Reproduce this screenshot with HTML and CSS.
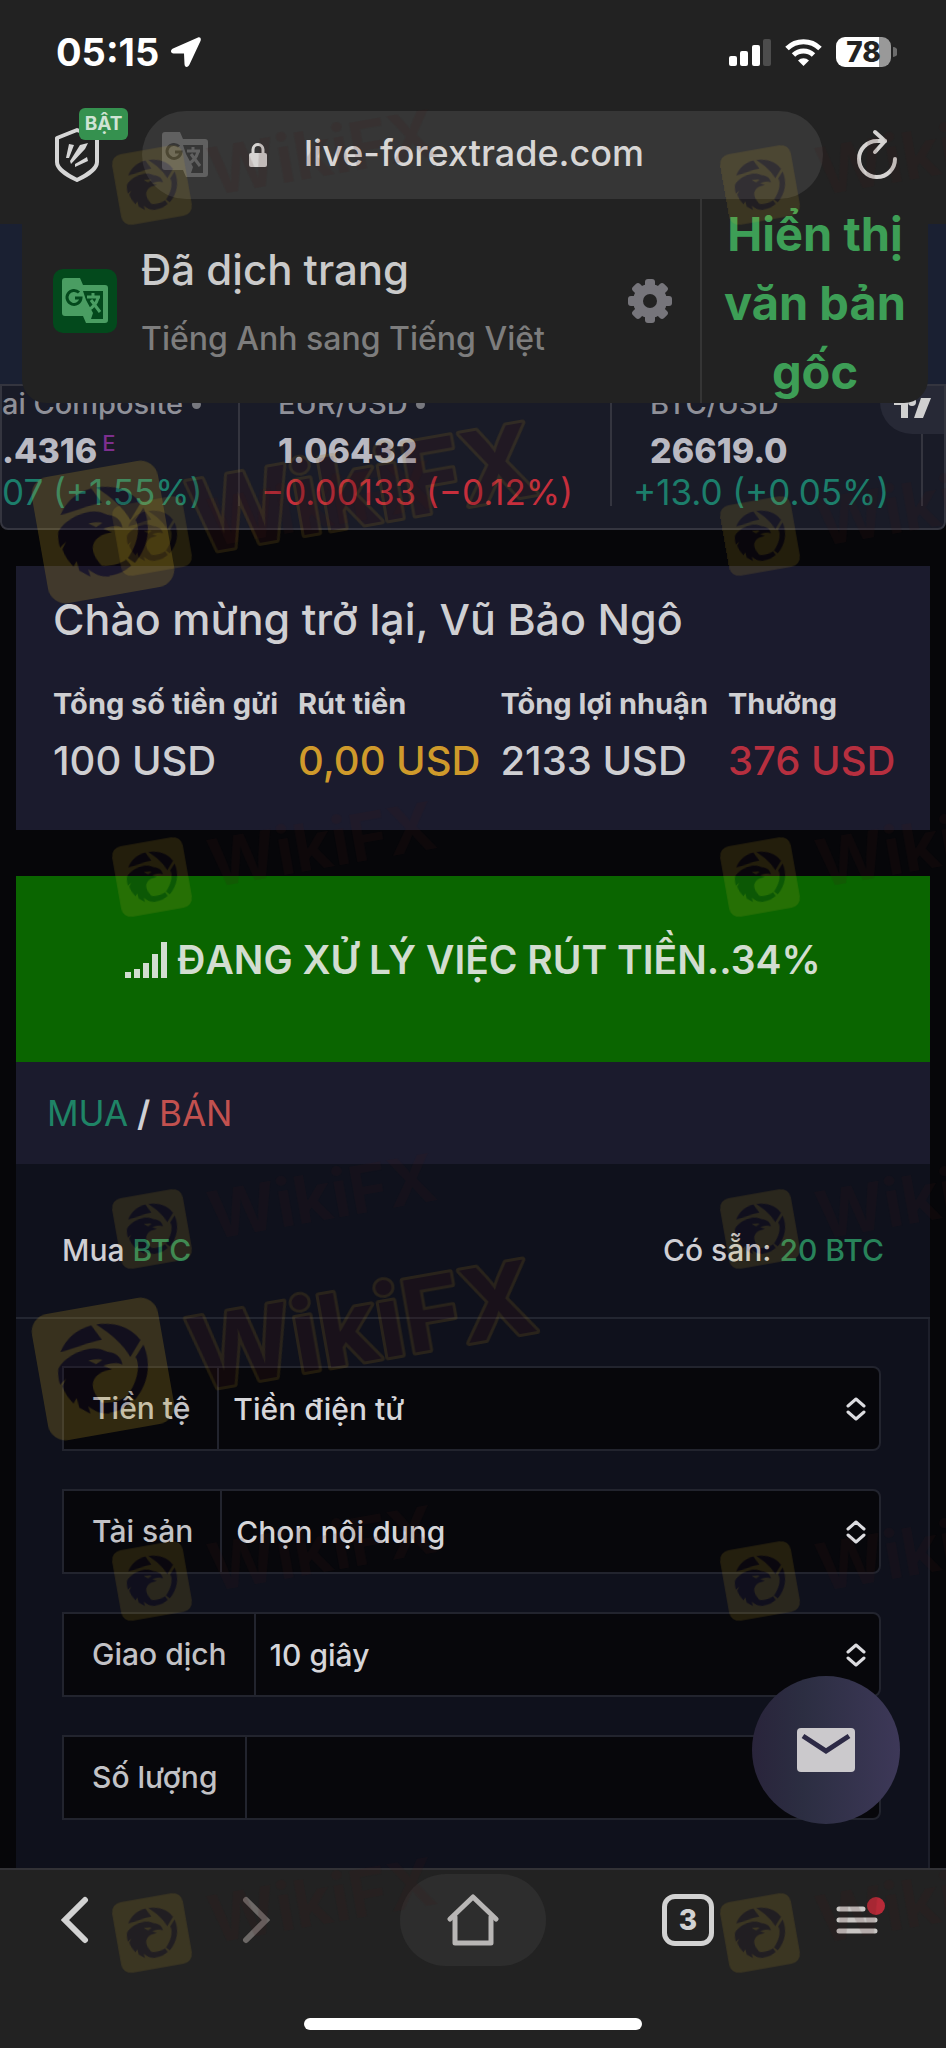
FILE: index.html
```html
<!DOCTYPE html>
<html lang="vi">
<head>
<meta charset="UTF-8">
<meta name="viewport" content="width=device-width, initial-scale=1">
<title>live-forextrade.com</title>
<link rel="stylesheet" href="styles.css">
</head>
<body>
<div class="phone">

<header class="top">
  <div class="status">
    <div class="clock">05:15
      <svg width="30" height="30" viewBox="0 0 30 30"><path d="M27 .5 2 11.500c-3 1.500-2.500 5 .5 5H13l.5 10.500c0 3.500 3.500 4 5 .5L29.500 4c1-2.500-.5-4.500-2.500-3.500z" fill="#fff"/></svg>
    </div>
    <div class="signals">
      <svg width="42" height="27" viewBox="0 0 42 27" fill="#fff"><rect y="17" width="8" height="10" rx="2"/><rect x="11" y="12" width="8" height="15" rx="2"/><rect x="23" y="6" width="8" height="21" rx="2"/><rect x="34" width="8" height="27" rx="2" fill="#4c4c4c"/></svg>
      <svg width="37" height="27" viewBox="0 0 37 27"><g fill="none" stroke="#fff" stroke-width="5"><path d="M2 9.500a23.500 23.500 0 0 1 33 0"/><path d="M8.500 16a14.500 14.500 0 0 1 20 0"/></g><path d="M18.500 27l-5.500-5.500a8 8 0 0 1 11 0z" fill="#fff"/></svg>
      <div class="battery"><span>78</span></div>
      <svg class="cap" width="4" height="10" viewBox="0 0 4 10"><path d="M0 0a5 5 0 0 1 0 10z" fill="#6c6c6c"/></svg>
    </div>
  </div>
  <div class="address">
    <button class="shield" aria-label="Chặn quảng cáo">
      <svg width="46" height="56" viewBox="0 0 46 56"><path d="M23 3 43 11v24c0 6-9 13-20 18C12 48 3 41 3 35V11z" fill="none" stroke="#d6d6d6" stroke-width="4" stroke-linejoin="round"/><path d="M15 17l5 1-5 13h-3zM26 18l8-2-3 6-14 15-1-3zM33 30l1 4-13 6v-3z" fill="#d6d6d6"/></svg>
      <span class="on">BẬT</span>
    </button>
    <div class="url">
      <svg class="tr-icon" width="46" height="46" viewBox="0 0 46 46"><use href="#translate"/></svg>
      <svg class="lock" width="18" height="24" viewBox="0 0 18 24"><rect y="10" width="18" height="14" rx="2" fill="#d6d4d2"/><path d="M4 11V6.500a5 5 0 0 1 10 0V11" fill="none" stroke="#d6d4d2" stroke-width="3"/></svg>
      <span>live-forextrade.com</span>
    </div>
    <button class="reload" aria-label="Tải lại">
      <svg width="44" height="52" viewBox="0 0 44 52" fill="none" stroke="#d6d4d2" stroke-width="4" stroke-linecap="round" stroke-linejoin="round"><path d="M40 30a18 18 0 1 1-18-18h8"/><path d="M20 3l10 9-10 11"/></svg>
    </button>
  </div>
  <div class="translate">
    <div class="tr-badge"><svg width="46" height="46" viewBox="0 0 46 46"><use href="#translate"/></svg></div>
    <div class="tr-text">
      <strong>Đã dịch trang</strong>
      <span>Tiếng Anh sang Tiếng Việt</span>
    </div>
    <button class="gear" aria-label="Cài đặt">
      <svg width="44" height="44" viewBox="0 0 44 44"><g fill="#76757b"><circle cx="22" cy="22" r="17"/><g id="teeth"><rect x="17" y="0" width="10" height="44" rx="3"/><rect x="0" y="17" width="44" height="10" rx="3"/></g><use href="#teeth" transform="rotate(45 22 22)"/></g><circle cx="22" cy="22" r="7" fill="#222"/></svg>
    </button>
    <button class="original">Hiển thị văn bản gốc</button>
  </div>
</header>

<main>
  <div class="navstrip"></div>
  <section class="ticker">
    <div class="quote first">
      <span class="name">ai Composite <i></i></span>
      <b>.4316<sup>E</sup></b>
      <span class="up">07 (+1.55%)</span>
    </div>
    <div class="quote second">
      <span class="name">EUR/USD <i></i></span>
      <b>1.06432</b>
      <span class="down">−0.00133 (−0.12%)</span>
    </div>
    <div class="quote third">
      <span class="name">BTC/USD</span>
      <b>26619.0</b>
      <span class="up">+13.0 (+0.05%)</span>
    </div>
    <a class="tv" href="#" aria-label="TradingView"><svg width="38" height="20" viewBox="0 0 38 20" fill="#d0d0d0"><path d="M0 0h14v20H7V7H0z"/><circle cx="18" cy="4" r="4"/><path d="M27 0h10l-8 20h-9z"/></svg></a>
  </section>

  <section class="welcome">
    <h1>Chào mừng trở lại, Vũ Bảo Ngô</h1>
    <dl>
      <div><dt>Tổng số tiền gửi</dt><dd>100 USD</dd></div>
      <div><dt>Rút tiền</dt><dd class="gold">0,00 USD</dd></div>
      <div><dt>Tổng lợi nhuận</dt><dd>2133 USD</dd></div>
      <div><dt>Thưởng</dt><dd class="red">376 USD</dd></div>
    </dl>
  </section>

  <section class="progress">
    <svg width="42" height="36" viewBox="0 0 42 36" fill="#d2ddd0"><rect y="30" width="6" height="6"/><rect x="9" y="27" width="6" height="9"/><rect x="18" y="21" width="6" height="15"/><rect x="27" y="12" width="6" height="24"/><rect x="36" width="6" height="36"/></svg>
    <h2>ĐANG XỬ LÝ VIỆC RÚT TIỀN..34%</h2>
  </section>

  <section class="trade">
    <h2><span class="buy">MUA</span> / <span class="sell">BÁN</span></h2>
    <div class="pair">
      <span>Mua <em>BTC</em></span>
      <span>Có sẵn: <em>20 BTC</em></span>
    </div>
    <form>
      <div class="field">
        <label for="currency">Tiền tệ</label>
        <select id="currency"><option>Tiền điện tử</option></select>
        <svg class="arrows" width="20" height="24" viewBox="0 0 20 24"><use href="#updown"/></svg>
      </div>
      <div class="field">
        <label for="asset">Tài sản</label>
        <select id="asset"><option>Chọn nội dung</option></select>
        <svg class="arrows" width="20" height="24" viewBox="0 0 20 24"><use href="#updown"/></svg>
      </div>
      <div class="field">
        <label for="duration">Giao dịch</label>
        <select id="duration"><option>10 giây</option></select>
        <svg class="arrows" width="20" height="24" viewBox="0 0 20 24"><use href="#updown"/></svg>
      </div>
      <div class="field">
        <label for="amount">Số lượng</label>
        <input id="amount" type="text">
      </div>
    </form>
  </section>

  <button class="mail" aria-label="Liên hệ">
    <svg width="58" height="44" viewBox="0 0 58 44"><rect width="58" height="44" rx="4" fill="#cbc9cc"/><path d="M6 8l23 15L52 8" fill="none" stroke="#2c2945" stroke-width="5"/></svg>
  </button>
</main>

<footer class="toolbar">
  <nav>
    <button aria-label="Quay lại"><svg width="28" height="48" viewBox="0 0 28 48"><path d="M24 4 4 24l20 20" fill="none" stroke="#d2d2d2" stroke-width="6" stroke-linecap="round"/></svg></button>
    <button aria-label="Tiến"><svg width="28" height="48" viewBox="0 0 28 48"><path d="M4 4l20 20L4 44" fill="none" stroke="#6c6866" stroke-width="6" stroke-linecap="round"/></svg></button>
    <button class="home" aria-label="Trang chủ"><svg width="52" height="52" viewBox="0 0 52 52" fill="none" stroke="#b8b6b5" stroke-width="5" stroke-linecap="round" stroke-linejoin="round"><path d="M3 25 26 3l23 22"/><path d="M8 23v26h36V23"/></svg></button>
    <button aria-label="Thẻ"><span class="tabs">3</span></button>
    <button aria-label="Menu"><svg width="50" height="52" viewBox="0 0 50 52"><path d="M3 15h24M3 26h36M3 37h36" stroke="#c9c6c4" stroke-width="5" stroke-linecap="round"/><circle cx="40" cy="12" r="9" fill="#b82a38"/></svg></button>
  </nav>
  <div class="grip"></div>
</footer>

<svg class="marks" aria-hidden="true">
  <defs>
    <g id="updown" fill="none" stroke="#dcdce0" stroke-width="3" stroke-linecap="round" stroke-linejoin="round"><path d="M2 9l8-7 8 7M2 15l8 7 8-7"/></g>
    <mask id="cut">
      <rect width="46" height="46" fill="#fff"/>
      <path d="M21 13h20v28H29l2-6-7-13z" fill="#000"/>
      <path d="M17 14.500a7 7 0 1 0 2 5.500h-6" fill="none" stroke="#000" stroke-width="3"/>
      <path d="M25 19h13M31 15v4M36 20c-2 7-6 10-10 12M29 22l9 12" fill="none" stroke="#fff" stroke-width="3"/>
    </mask>
    <g id="translate" fill="currentColor" mask="url(#cut)"><path d="M3 0h15l3 7h22a3 3 0 0 1 3 3v32a3 3 0 0 1-3 3H24l-3-7H3a3 3 0 0 1-3-3V3a3 3 0 0 1 3-3z"/></g>
    <!-- eagle inside a shutter ring, 128 units wide -->
    <g id="eagle">
      <rect class="tile" x="-64" y="-64" width="128" height="128" rx="18"/>
      <g class="bird">
        <path d="M-39-24C-31-37-18-44-4-45L4-29C-10-29-25-25-39-24z"/>
        <path d="M1-45C19-45 35-36 42-22L29-7C24-21 14-33 1-45z"/>
        <path d="M44-17c5 20-2 40-18 53L20 30C32 18 38 2 34-6z"/>
        <path d="M22 38C14 43 6 45-2 44L-10 32C0 36 14 34 18 31z"/>
        <path fill-rule="evenodd" d="M-44-8C-36-18-20-23-7-22 2-21 5-17 8-16 15-14 20-9 20-1 13-5 6-4 1-3L9 2C-4 1-14 7-13 18-12 28-5 34-1 45-10 44-16 40-21 34L-20 42-30 34-31 24-35 29C-39 23-42 17-43 10L-38 3-45 8C-46 2-45-4-44-8zM-13-11l7 5 7-3c-4-2-8-2-14-2z"/>
      </g>
    </g>
    <g id="small">
      <g transform="rotate(-10)"><use href="#eagle" transform="scale(.560)"/><text x="58" y="21">WikiFX</text></g>
    </g>
    <g id="big">
      <g transform="rotate(-10)"><use href="#eagle"/><text x="88" y="38">WikiFX</text></g>
    </g>
  </defs>
  <g class="faint">
    <use href="#small" x="152" y="185"/><use href="#small" x="760" y="185"/>
    <use href="#small" x="152" y="536"/><use href="#small" x="760" y="536"/>
    <use href="#small" x="152" y="877"/><use href="#small" x="760" y="877"/>
    <use href="#small" x="152" y="1229"/><use href="#small" x="760" y="1229"/>
    <use href="#small" x="152" y="1581"/><use href="#small" x="760" y="1581"/>
    <use href="#small" x="152" y="1933"/><use href="#small" x="760" y="1933"/>
  </g>
  <g class="strong">
    <use href="#big" x="103" y="532"/><use href="#big" x="103" y="1369"/>
  </g>
</svg>
</div>
</body>
</html>
```
FILE: styles.css
```css
*{box-sizing:border-box;}
body{margin:0;background:#060609;color:#cfcfd4;font-family:Inter,'Noto Sans',sans-serif;}
button{padding:0;border:0;background:none;font:inherit;color:inherit;}
h1,h2,dl,dd{margin:0;font-weight:500;}
svg{display:block;flex:none;}
.phone{position:relative;display:flex;flex-direction:column;height:100vh;overflow:hidden;}

/* browser chrome */
.top{position:relative;z-index:2;height:224px;background:#222;}
.status{display:flex;justify-content:space-between;align-items:center;height:104px;padding:0 49px 0 56px;}
.clock{display:flex;align-items:center;gap:12px;font-size:38px;font-weight:700;color:#fff;}
.signals{display:flex;align-items:center;}
.signals svg{margin-right:14px;}
.signals .cap{margin:0 0 0 2px;}
.battery{width:55px;height:30px;border-radius:9px;background:linear-gradient(90deg,#fff 43px,#999 43px);color:#222;font-size:28px;line-height:30px;font-weight:800;text-align:center;}
.address{display:flex;align-items:center;margin-top:7px;padding:0 47px 0 54px;}
.shield{position:relative;width:46px;margin-right:42px;}
.on{position:absolute;left:25px;top:-19px;width:49px;height:32px;border-radius:6px;background:#35914f;color:#cfe3d3;font-size:19px;line-height:32px;font-weight:700;text-align:center;}
.url{display:flex;align-items:center;flex:1;height:88px;padding-left:20px;border-radius:44px;background:#363636;font-size:36px;font-weight:500;color:#d8d6d5;}
.url span{padding-bottom:4px;}
.tr-icon{color:#606060;}
.lock{margin:0 37px 0 41px;}
.reload{margin-left:32px;}
.translate{position:absolute;left:22px;right:18px;top:199px;height:204px;display:flex;align-items:center;background:#222;border-radius:0 0 24px 24px;}
.tr-badge{display:flex;align-items:center;justify-content:center;width:64px;height:64px;margin:0 24px 0 31px;border-radius:10px;background:#03491c;color:#4a9d62;}
.tr-text{flex:1;padding-top:6px;}
.tr-text strong{display:block;font-size:42px;line-height:62px;font-weight:500;color:#cacaca;}
.tr-text span{display:block;padding-top:8px;font-size:32px;line-height:60px;font-weight:500;color:#7d7d7d;}
.gear{margin-right:28px;}
.original{align-self:stretch;width:228px;padding-bottom:8px;border-left:2px solid #353535;color:#3d9e56;font-size:47px;line-height:69px;font-weight:700;}

/* page */
main{position:relative;flex:1;min-height:0;overflow:hidden;}
.navstrip{height:160px;background:#1a2032;}
.ticker{position:relative;display:flex;height:146px;border:2px solid #34353f;border-radius:0 0 8px 8px;background:#191b27;overflow:hidden;}
.quote{position:relative;margin-bottom:22px;border-right:2px solid #34353f;white-space:nowrap;}
.quote>*{display:block;}
.quote .name{font-size:29px;line-height:36px;font-weight:500;color:#8f9098;}
.quote i{display:inline-block;width:9px;height:9px;margin-left:1px;border-radius:50%;background:#77787e;vertical-align:5px;}
.quote b{padding-top:8px;font-size:34px;line-height:42px;font-weight:800;color:#b9b9c2;}
.quote sup{margin-left:5px;font-size:22px;line-height:22px;font-weight:500;color:#7d2f8f;}
.quote .up,.quote .down{font-size:35px;line-height:40px;font-weight:400;}
.first{width:238px;}
.second{width:372px;padding-left:38px;}
.third{width:311px;padding-left:38px;}
.second .down,.third .up{margin-left:-17px;}
.up{color:#1c7e6b;}
.down{color:#c62e3c;}
.tv{position:absolute;right:0;top:0;display:flex;align-items:flex-start;width:64px;height:48px;padding:12px 0 0 14px;border-radius:0 0 0 32px;background:#272936;}
.welcome{margin:36px 16px 0;height:264px;padding:18px 37px 0;background:#1b1b2d;color:#cfcfd2;}
.welcome h1{font-size:43px;line-height:70px;}
.welcome dl{display:flex;gap:20px;padding-top:30px;white-space:nowrap;}
.welcome dt{font-size:29px;line-height:40px;font-weight:700;}
.welcome dd{font-size:40px;line-height:74px;}
.welcome .gold{color:#cf9a2b;}
.welcome .red{color:#b62f3f;}
.progress{display:flex;justify-content:center;align-items:flex-start;gap:10px;margin:46px 16px 0;height:186px;padding-top:66px;background:#0a6500;color:#d2ddd0;}
.progress h2{font-size:39px;line-height:36px;font-weight:600;}
.trade{margin:0 16px;height:900px;background:#0f111c;}
.trade h2{height:102px;padding-left:31px;background:#1b1b2d;font-size:35px;line-height:102px;font-weight:600;}
.trade .buy{color:#1f8466;font-weight:400;}
.trade .sell{color:#c2514f;font-weight:400;}
.pair{display:flex;justify-content:space-between;height:155px;padding:0 46px;border-bottom:2px solid #232631;font-size:30px;line-height:172px;font-weight:500;}
.pair em{font-style:normal;color:#28835a;}
form{display:flex;flex-direction:column;gap:38px;height:100%;padding:47px 47px 0 46px;border-right:2px solid #1d1f2a;}
.field{position:relative;display:flex;height:85px;flex:none;border:2px solid #22242e;border-radius:0 8px 8px 0;background:#07070b;font-size:30px;font-weight:500;}
.field label{padding:0 27px 0 28px;border-right:2px solid #22242e;line-height:81px;color:#c2c2c6;}
.field select,.field input{flex:1;min-width:0;padding:0 14px;border:0;outline:0;appearance:none;background:none;color:#d6d6da;font:inherit;}
.arrows{position:absolute;right:13px;top:29px;pointer-events:none;}
.mail{position:absolute;right:46px;bottom:44px;display:flex;align-items:center;justify-content:center;width:148px;height:148px;border-radius:50%;background:linear-gradient(90deg,#29243b,#2c2e42 35%,#3d3858);}

/* bottom bar */
.toolbar{position:relative;height:180px;border-top:2px solid #323236;background:#222;}
nav{display:grid;grid-template-columns:1fr 1fr 146px 1fr 1fr;align-items:center;justify-items:center;height:100px;}
nav button{display:flex;align-items:center;justify-content:center;}
nav button:first-child{justify-self:start;margin-left:61px;}
nav button:nth-child(2){justify-self:start;margin-left:42px;}
nav button:last-child{justify-self:end;margin-right:60px;}
nav .home{width:146px;height:92px;border-radius:46px;background:#2d2d2d;}
.tabs{width:52px;height:52px;margin-left:84px;border:5px solid #d2d2d2;border-radius:13px;font-size:28px;line-height:43px;font-weight:800;color:#d2d2d2;}
.grip{width:338px;height:12px;margin:48px auto 0;border-radius:6px;background:#fff;}

/* watermark layer */
.marks{position:absolute;left:0;top:0;z-index:5;width:100%;height:100%;pointer-events:none;}
.marks text{font-weight:700;stroke-linejoin:round;paint-order:stroke;}
.tile{fill:#dcb428;stroke:none;}
.bird{fill:#200c24;stroke:none;}
.faint{opacity:.14;font-size:66px;fill:#401c1a;}
.strong{opacity:.2;font-size:100px;fill:#401418;stroke:#90701c;stroke-width:6px;}
```
